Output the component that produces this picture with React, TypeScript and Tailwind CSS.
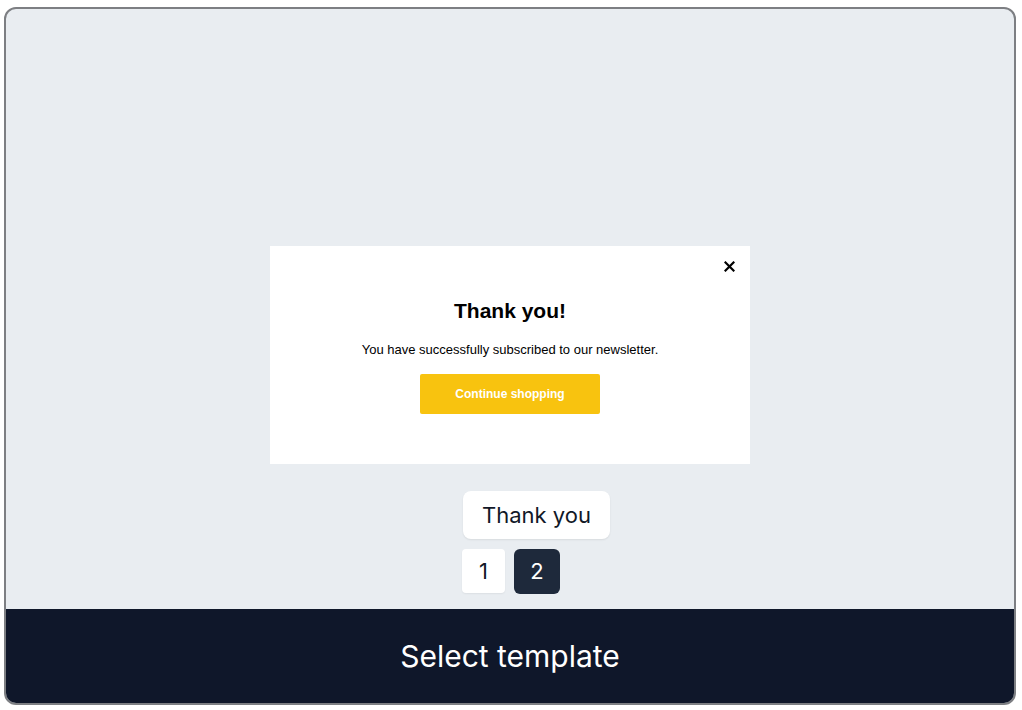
import React from 'react';

function CloseIcon() {
  return (
    <svg width="11" height="11" viewBox="0 0 11 11" fill="none">
      <path d="M1.5 1.5L9.5 9.5M9.5 1.5L1.5 9.5" stroke="#000" strokeWidth="2.2" strokeLinecap="square" />
    </svg>
  );
}

function PopupPreview() {
  return (
    <div className="relative w-[480px] h-[218px] bg-white flex flex-col items-center pt-[53px] font-['Liberation_Sans',Arial,sans-serif]">
      <button className="absolute right-[15px] top-[15px] p-0">
        <CloseIcon />
      </button>
      <h2 className="text-[21px] leading-[24px] font-bold text-black">Thank you!</h2>
      <p className="mt-[19px] text-[13px] leading-[16px] text-black">
        You have successfully subscribed to our newsletter.
      </p>
      <button className="mt-[16px] w-[180px] h-[40px] bg-[#f8c30f] rounded-[2px] text-white text-[12px] font-bold">
        Continue shopping
      </button>
    </div>
  );
}

export default function App() {
  const pages = [1, 2];
  const active = 2;

  return (
    <div className="w-full h-[710px] bg-white pl-[4px] pr-[6px] pt-[7px] pb-[5px]">
      <div className="h-full flex flex-col border-2 border-[#7d7f83] rounded-[12px] overflow-hidden bg-[#e9edf1] font-['Inter',sans-serif]">
        <div className="flex-1 flex flex-col items-center justify-end pb-[15px]">
          <PopupPreview />
          <div className="w-[480px] pl-[192px] flex flex-col items-start">
            <div className="mt-[27px] ml-[1px] h-[48px] px-[19px] flex items-center bg-white rounded-[8px] shadow-[0_1px_2px_rgba(0,0,0,0.08)] text-[22px] text-[#111827]">
              Thank you
            </div>
            <div className="mt-[10px] flex gap-[9px]">
              {pages.map((p) => (
                <button
                  key={p}
                  className={
                    p === active
                      ? 'w-[46px] h-[45px] rounded-[6px] bg-[#1e293b] text-white text-[22px] flex items-center justify-center'
                      : 'w-[43px] h-[44px] rounded-[4px] bg-white text-[#111827] text-[22px] flex items-center justify-center shadow-[0_1px_2px_rgba(0,0,0,0.06)]'
                  }
                >
                  {p}
                </button>
              ))}
            </div>
          </div>
        </div>
        <div className="h-[94px] bg-[#0f172a] flex items-center justify-center text-white text-[30px]">
          Select template
        </div>
      </div>
    </div>
  );
}
